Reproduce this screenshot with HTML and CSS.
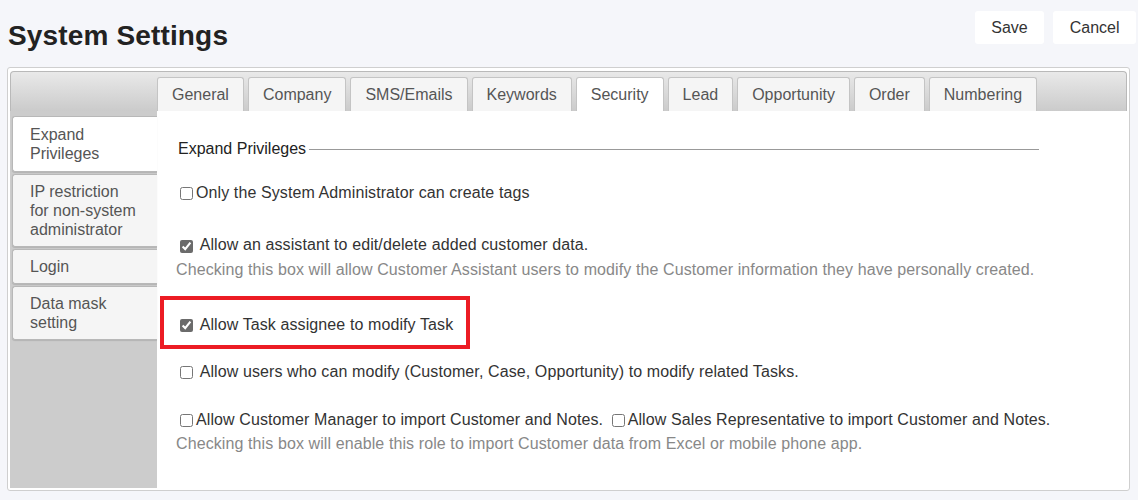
FILE: index.html
```html
<!DOCTYPE html>
<html lang="en">
<head>
  <meta charset="UTF-8">
  <meta name="viewport" content="width=device-width, initial-scale=1.0">
  <title>System Settings</title>
  <link rel="stylesheet" href="styles.css">
</head>
<body>
  <header class="page-head">
    <h1>System Settings</h1>
    <div class="actions">
      <button class="btn">Save</button>
      <button class="btn">Cancel</button>
    </div>
  </header>

  <section class="panel">
    <nav class="tabs">
      <a href="#">General</a>
      <a href="#">Company</a>
      <a href="#">SMS/Emails</a>
      <a href="#">Keywords</a>
      <a href="#" class="active">Security</a>
      <a href="#">Lead</a>
      <a href="#">Opportunity</a>
      <a href="#">Order</a>
      <a href="#">Numbering</a>
    </nav>

    <div class="panel-body">
      <aside class="side-tabs">
        <a href="#" class="active">Expand<br>Privileges</a>
        <a href="#">IP restriction<br>for non-system<br>administrator</a>
        <a href="#">Login</a>
        <a href="#">Data mask<br>setting</a>
      </aside>

      <div class="content">
        <div class="options">
          <div class="legend"><span>Expand Privileges</span></div>

          <div class="option first">
            <label><input type="checkbox">Only the System Administrator can create tags</label>
          </div>

          <div class="option wide">
            <label><input type="checkbox" checked> Allow an assistant to edit/delete added customer data.</label>
          </div>
          <div class="note">Checking this box will allow Customer Assistant users to modify the Customer information they have personally created.</div>

          <div class="option highlight">
            <label><input type="checkbox" checked> Allow Task assignee to modify Task</label>
          </div>

          <div class="option">
            <label><input type="checkbox"> Allow users who can modify (Customer, Case, Opportunity) to modify related Tasks.</label>
          </div>

          <div class="option">
            <label><input type="checkbox">Allow Customer Manager to import Customer and Notes.</label>
            <label><input type="checkbox">Allow Sales Representative to import Customer and Notes.</label>
          </div>
          <div class="note">Checking this box will enable this role to import Customer data from Excel or mobile phone app.</div>
        </div>
      </div>
    </div>
  </section>
</body>
</html>
```

FILE: styles.css
```css
body {
  margin: 0;
  background-color: #f5f6fa;
  color: #333;
  font-family: "Liberation Sans", Arial, sans-serif;
  font-size: 16px;
}
.page-head {
  display: flex;
  justify-content: space-between;
  align-items: flex-start;
  padding: 0 2px 0 8px;
}
.page-head h1 {
  margin: 20px 0 0;
  font-size: 28px;
  line-height: 32px;
  font-weight: bold;
  letter-spacing: 0.15px;
  color: #222;
}
.actions {
  display: flex;
  gap: 9px;
  margin-top: 11px;
}
.btn {
  height: 33px;
  padding: 0 16.5px;
  border: none;
  border-radius: 3px;
  background-color: #fff;
  color: #333;
  font-family: inherit;
  font-size: 16px;
  cursor: pointer;
}
.panel {
  margin: 15px 8px 0 7px;
  padding: 3px 2px 2px 2px;
  background-color: #fff;
  border: 1px solid #cfcfcf;
  border-radius: 3px;
}
.tabs {
  display: flex;
  gap: 4px;
  height: 34px;
  padding: 5px 0 0 146px;
  background: linear-gradient(#e9e9e9, #cbcbcb);
  border: 1px solid #b9b9b9;
  border-radius: 4px 4px 0 0;
  border-bottom: none;
}
.tabs a {
  display: block;
  padding: 0 14px;
  line-height: 33px;
  background-color: #f5f5f5;
  border: 1px solid #c4c4c4;
  border-bottom: none;
  border-radius: 3px 3px 0 0;
  color: #555;
  text-decoration: none;
}
.tabs a.active {
  background-color: #fff;
}
.panel-body {
  display: flex;
  height: 377px;
}
.side-tabs {
  width: 145px;
  padding: 5px 0 0 2px;
  background-color: #ccc;
  display: flex;
  flex-direction: column;
  gap: 2px;
}
.side-tabs a {
  display: block;
  padding: 7px 0 7px 17px;
  line-height: 19px;
  background-color: #f5f5f5;
  border: 1px solid #b8b8b8;
  border-right: none;
  border-radius: 3px 0 0 3px;
  box-shadow: 0 1px 1px rgba(0, 0, 0, 0.12);
  color: #555;
  text-decoration: none;
}
.side-tabs a.active {
  padding-top: 8px;
  padding-bottom: 8px;
  background-color: #fff;
}
.content {
  flex: 1;
  padding-left: 19px;
  letter-spacing: 0.1px;
}
.options {
  max-width: 863px;
}
.legend {
  display: flex;
  align-items: center;
  margin-top: 28px;
  padding-left: 2px;
  line-height: 20px;
  letter-spacing: 0;
  color: #222;
}
.legend::after {
  content: "";
  flex: 1;
  height: 1px;
  margin-left: 3px;
  background-color: #999;
}
.option {
  line-height: 20px;
  margin-top: 28px;
  white-space: nowrap;
}
.option.first {
  margin-top: 24px;
}
.option.wide {
  margin-top: 32px;
}
.option input {
  vertical-align: middle;
  accent-color: #6b6b6b;
}
.note {
  margin-top: 4px;
  line-height: 20px;
  color: #888;
}
.note + .option {
  margin-top: 35px;
}
.option.highlight {
  position: relative;
  margin-bottom: -1px;
}
.option.highlight::before {
  content: "";
  position: absolute;
  left: -16px;
  top: -19px;
  width: 310px;
  height: 53px;
  box-sizing: border-box;
  border: 4px solid #ec1c24;
}
```
